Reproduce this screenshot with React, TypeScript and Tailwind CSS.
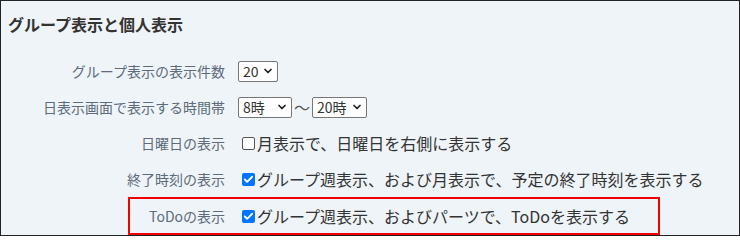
import { ChevronDown, Check } from 'lucide-react'

const FONT = '"Noto Sans CJK JP", "Noto Sans", sans-serif'

function FakeSelect({ value, width }: { value: string; width: string }) {
  return (
    <div
      className={`flex items-center justify-between h-[21px] ${width} pl-[4px] pr-[3px] bg-white border border-[#767676] rounded-[2px] text-[14px] leading-none text-[#333]`}
    >
      <span>{value}</span>
      <ChevronDown className="w-[12px] h-[12px] text-[#222]" strokeWidth={3.5} />
    </div>
  )
}

function CheckBox({ checked }: { checked: boolean }) {
  return checked ? (
    <span className="flex items-center justify-center w-[13px] h-[13px] rounded-[2px] bg-[#0075ff]">
      <Check className="w-[11px] h-[11px] text-white" strokeWidth={4} />
    </span>
  ) : (
    <span className="block w-[13px] h-[13px] rounded-[2px] border border-[#555] bg-white" />
  )
}

function Row({ label, children, labelWidth = 'w-[224px]' }: { label: string; children: React.ReactNode; labelWidth?: string }) {
  return (
    <div className="flex items-center h-[36px]">
      <div className={`${labelWidth} text-right text-[14px] leading-none text-[#5b6b7b] shrink-0`}>{label}</div>
      <div className="ml-[13px] flex items-center">{children}</div>
    </div>
  )
}

export default function App() {
  return (
    <div
      className="w-[740px] h-[236px] border border-[#222] bg-[#eff4f8] overflow-hidden"
      style={{ fontFamily: FONT }}
    >
      {/* Heading */}
      <h2 className="pl-[7px] pt-[14px] text-[16px] leading-[18px] font-bold text-[#333]">グループ表示と個人表示</h2>

      {/* Rows */}
      <div className="mt-[20px] flex flex-col">
        <Row label="グループ表示の表示件数">
          <FakeSelect value="20" width="w-[40px]" />
        </Row>
        <Row label="日表示画面で表示する時間帯">
          <FakeSelect value="8時" width="w-[54px]" />
          <span className="mx-[2px] text-[16px] leading-none text-[#555]">〜</span>
          <FakeSelect value="20時" width="w-[55px]" />
        </Row>
        <Row label="日曜日の表示">
          <div className="flex items-center gap-[2px] pl-[4px] text-[16px] leading-none text-[#333]">
            <CheckBox checked={false} />
            <span>月表示で、日曜日を右側に表示する</span>
          </div>
        </Row>
        <Row label="終了時刻の表示">
          <div className="flex items-center gap-[2px] pl-[4px] text-[16px] leading-none text-[#333]">
            <CheckBox checked />
            <span>グループ週表示、および月表示で、予定の終了時刻を表示する</span>
          </div>
        </Row>

        {/* Highlighted row */}
        <div className="ml-[127px] w-[532px] h-[38px] border-2 border-[#f00000] flex items-center">
          <div className="w-[95px] text-right text-[14px] leading-none text-[#5b6b7b] shrink-0">ToDoの表示</div>
          <div className="ml-[13px] flex items-center gap-[2px] pl-[4px] text-[16px] leading-none text-[#333]">
            <CheckBox checked />
            <span>グループ週表示、およびパーツで、ToDoを表示する</span>
          </div>
        </div>
      </div>
    </div>
  )
}
